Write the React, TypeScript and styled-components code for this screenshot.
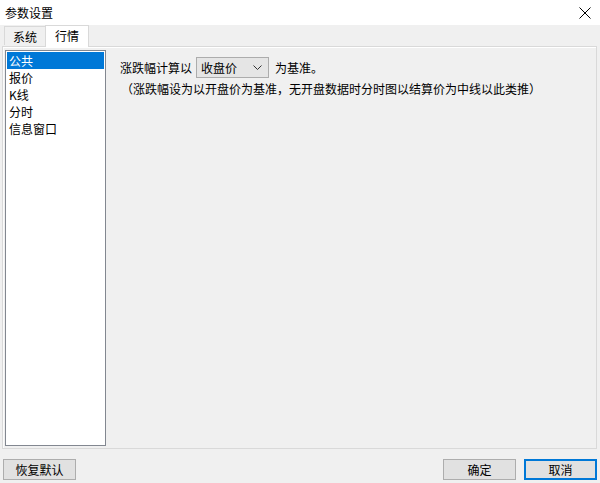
import { FC } from "react";
import styled, { createGlobalStyle, css } from "styled-components";

const GlobalStyle = createGlobalStyle`
  html, body {
    margin: 0;
    padding: 0;
    background: #f0f0f0;
  }
  * {
    box-sizing: border-box;
  }
`;

const fontStack = `"Microsoft YaHei", "Noto Sans CJK SC", "Liberation Sans", sans-serif`;

const Window = styled.div`
  width: 600px;
  height: 483px;
  display: flex;
  flex-direction: column;
  background: #f0f0f0;
  font-family: ${fontStack};
  font-size: 12px;
  color: #000;
  overflow: hidden;
`;

const TitleBar = styled.div`
  height: 25px;
  flex: 0 0 25px;
  background: #fff;
  display: flex;
  align-items: center;
  justify-content: space-between;
  padding: 0 8px 0 5px;
`;

const CloseButton = styled.div`
  width: 14px;
  height: 14px;
  display: flex;
  align-items: center;
  justify-content: center;
`;

const Body = styled.div`
  flex: 1;
  display: flex;
  flex-direction: column;
  padding: 0 3px 0 2px;
`;

const TabStrip = styled.div`
  height: 21px;
  display: flex;
  align-items: flex-end;
  padding-left: 2px;
  position: relative;
  z-index: 1;
`;

const Tab = styled.div<{ $active?: boolean }>`
  height: 19px;
  padding: 0 8px;
  display: flex;
  align-items: center;
  border: 1px solid #d9d9d9;
  border-bottom: none;
  background: #f0f0f0;
  margin-bottom: 1px;

  ${(p) =>
    p.$active &&
    css`
      height: 22px;
      padding: 0 9px 2px;
      margin-bottom: -1px;
      margin-left: -1px;
      background: #fff;
      border-color: #d9d9d9;
    `}
`;

const TabPanel = styled.div`
  height: 403px;
  border: 1px solid #d9d9d9;
  box-shadow: inset 0 1px 0 #fff, inset 1px 0 0 #fbfbfb;
  background: #f0f0f0;
  display: flex;
  padding: 3px 3px 2px 2px;
  gap: 8px;
`;

const CategoryList = styled.div`
  width: 101px;
  height: 396px;
  background: #fff;
  border: 1px solid #828790;
  padding: 1px;
  display: flex;
  flex-direction: column;
`;

const ListItem = styled.div<{ $selected?: boolean }>`
  height: 17px;
  line-height: 17px;
  padding-left: 2px;
  white-space: nowrap;
  ${(p) =>
    p.$selected &&
    css`
      background: #0078d7;
      color: #fff;
    `}
`;

const Content = styled.div`
  flex: 1;
  padding: 7px 0 0 1px;
  display: flex;
  flex-direction: column;
`;

const SettingRow = styled.div`
  display: flex;
  align-items: center;
  height: 21px;
  padding-left: 5px;
`;

const Select = styled.div`
  width: 73px;
  height: 21px;
  margin: 0 6px 0 4px;
  background: #e5e5e5;
  border: 1px solid #acacac;
  display: flex;
  align-items: center;
  justify-content: space-between;
  padding: 0 6px 0 4px;
`;

const Note = styled.div`
  margin-top: 1px;
  padding-left: 6px;
  height: 20px;
  line-height: 20px;
  white-space: nowrap;
`;

const Footer = styled.div`
  height: 35px;
  display: flex;
  align-items: flex-start;
  justify-content: space-between;
  padding: 10px 0 0 1px;
`;

const ButtonGroup = styled.div`
  display: flex;
  gap: 8px;
`;

const Button = styled.div<{ $default?: boolean }>`
  width: 73px;
  height: 21px;
  display: flex;
  align-items: center;
  justify-content: center;
  background: #e1e1e1;
  border: 1px solid #adadad;
  ${(p) =>
    p.$default &&
    css`
      border: 2px solid #0078d7;
    `}
`;

const items = ["公共", "报价", "K线", "分时", "信息窗口"];

const App: FC = () => {
  return (
    <Window lang="zh-CN">
      <GlobalStyle />
      <TitleBar>
        <span>参数设置</span>
        <CloseButton>
          <svg width="12" height="12" viewBox="0 0 12 12">
            <path d="M0.5 0.5 L11.5 11.5 M11.5 0.5 L0.5 11.5" stroke="#000" strokeWidth="1" />
          </svg>
        </CloseButton>
      </TitleBar>
      <Body>
        <TabStrip>
          <Tab>系统</Tab>
          <Tab $active>行情</Tab>
        </TabStrip>
        <TabPanel>
          <CategoryList>
            {items.map((it, i) => (
              <ListItem key={it} $selected={i === 0}>
                {it}
              </ListItem>
            ))}
          </CategoryList>
          <Content>
            <SettingRow>
              <span>涨跌幅计算以</span>
              <Select>
                <span>收盘价</span>
                <svg width="9" height="5" viewBox="0 0 9 5">
                  <path d="M0.5 0.5 L4.5 4.5 L8.5 0.5" fill="none" stroke="#333" strokeWidth="1" />
                </svg>
              </Select>
              <span>为基准。</span>
            </SettingRow>
            <Note>（涨跌幅设为以开盘价为基准，无开盘数据时分时图以结算价为中线以此类推）</Note>
          </Content>
        </TabPanel>
        <Footer>
          <Button>恢复默认</Button>
          <ButtonGroup>
            <Button>确定</Button>
            <Button $default>取消</Button>
          </ButtonGroup>
        </Footer>
      </Body>
    </Window>
  );
};

export default App;
